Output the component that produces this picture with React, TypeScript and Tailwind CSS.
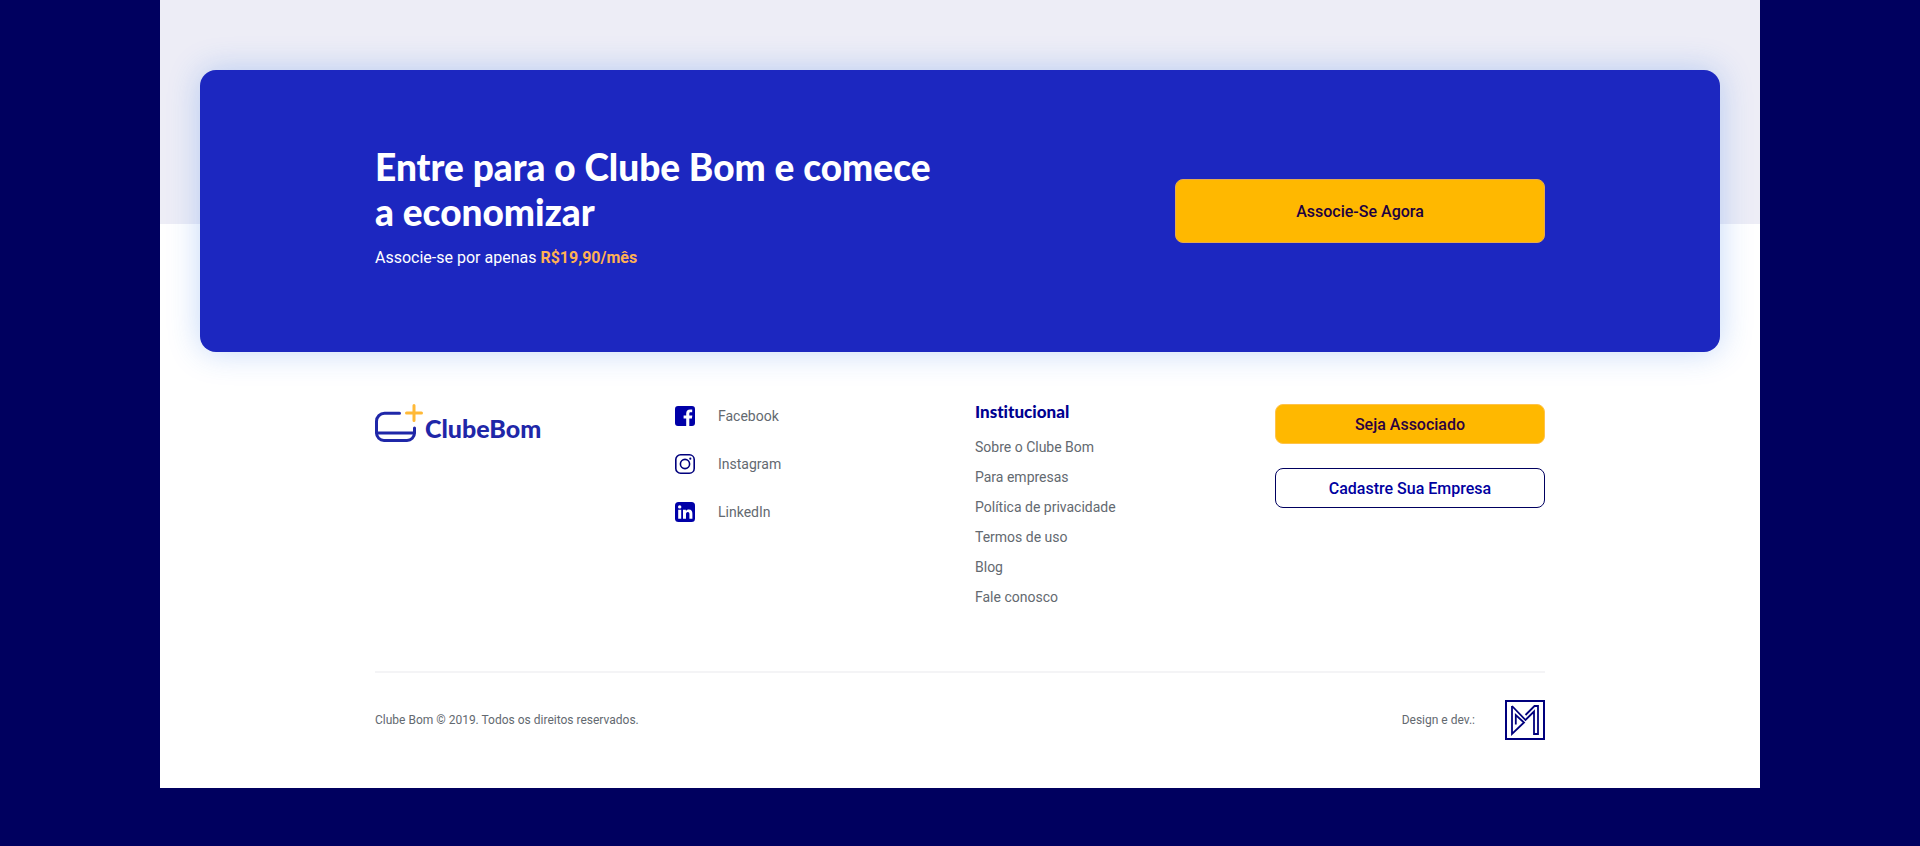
import clsx from 'clsx';

interface ISocialLink {
  label: string;
  href: string;
  icon: React.ReactNode;
}

const institutionalLinks: string[] = [
  'Sobre o Clube Bom',
  'Para empresas',
  'Política de privacidade',
  'Termos de uso',
  'Blog',
  'Fale conosco',
];

const socialLinks: ISocialLink[] = [
  {
    label: 'Facebook',
    href: '#facebook',
    icon: (
      <svg viewBox="0 0 20 20" className="size-5" fill="#0000a8" aria-hidden="true">
        <path d="M3 0h14a3 3 0 0 1 3 3v14a3 3 0 0 1-3 3h-2.700v-7.400h2.600l.4-3h-3V7.700c0-.9.4-1.400 1.400-1.400h1.500V3.600c-.6-.1-1.300-.2-2.100-.2-2.400 0-3.900 1.400-3.900 4v2.200H8.600v3h2.600V20H3a3 3 0 0 1-3-3V3a3 3 0 0 1 3-3z" />
      </svg>
    ),
  },
  {
    label: 'Instagram',
    href: '#instagram',
    icon: (
      <svg viewBox="0 0 20 20" className="size-5" fill="none" stroke="#00007d" strokeWidth="1.6" aria-hidden="true">
        <rect x="0.8" y="0.8" width="18.4" height="18.4" rx="4.8" />
        <circle cx="10" cy="10" r="4.6" />
        <circle cx="15.3" cy="4.7" r="1.1" fill="#00007d" stroke="none" />
      </svg>
    ),
  },
  {
    label: 'LinkedIn',
    href: '#linkedin',
    icon: (
      <svg viewBox="0 0 20 20" className="size-5" aria-hidden="true">
        <rect width="20" height="20" rx="3.5" fill="#0000a8" />
        <g fill="#fff">
          <circle cx="4.7" cy="4.9" r="1.7" />
          <path d="M3.2 7.8h3v9h-3zM8 7.8h2.900V9c.5-.8 1.500-1.500 2.900-1.500 2.800 0 3.600 1.800 3.600 4.300v5h-3v-4.500c0-1.200-.3-2.200-1.600-2.200s-1.800 1-1.800 2.200v4.500H8z" />
        </g>
      </svg>
    ),
  },
];

function Logo() {
  return (
    <a href="#inicio" className="flex items-start">
      <svg viewBox="0 0 50 40" className="h-10 w-[50px]" fill="none" strokeLinecap="round" aria-hidden="true">
        <g stroke="#1f27a8" strokeWidth="3">
          <path d="M24.5 9.3H9.5a8 8 0 0 0-8 8V29a7.500 7.500 0 0 0 7.500 7.500h23a7.500 7.500 0 0 0 7.500-7.500v-5" />
          <path d="M2 29h37" />
        </g>
        <path d="M39 1.500v15M31.500 9h15" stroke="#ffb937" strokeWidth="3" />
      </svg>
      <span className="pt-2 font-['Lato',sans-serif] text-[25px] leading-8 font-black text-[#1f27a8]">
        ClubeBom
      </span>
    </a>
  );
}

function Button({
  children,
  className,
}: {
  children: React.ReactNode;
  className: string;
}) {
  return (
    <button
      type="button"
      className={clsx(
        'w-full cursor-pointer rounded-lg border pt-0.5 text-base font-medium',
        className
      )}
    >
      {children}
    </button>
  );
}

function CallToAction() {
  return (
    <section className="relative -mt-[154px] px-10">
      <div className="rounded-2xl bg-[#1c27c0] py-[74px] shadow-[0_0_32px_rgba(40,110,230,0.28)]">
        <div className="mx-auto flex max-w-[1170px] items-center justify-between gap-8">
          <div className="max-w-[570px] pb-2">
            <h2 className="font-['Lato',sans-serif] text-[37px] leading-[45px] font-black text-white">
              Entre para o Clube Bom e comece a economizar
            </h2>
            <p className="mt-3 text-base leading-6 text-white">
              Associe-se por apenas{' '}
              <strong className="font-bold text-[#ffb153]">R$19,90/mês</strong>
            </p>
          </div>
          <div className="w-[370px]">
            <Button className="h-16 border-[#e5a94f] bg-[#ffb800] text-[#1c0040]">
              Associe-Se Agora
            </Button>
          </div>
        </div>
      </div>
    </section>
  );
}

function Footer() {
  return (
    <footer className="mx-auto max-w-[1170px] pt-[52px] pb-12 text-[#636970]">
      <div className="grid grid-cols-4 gap-[30px]">
        <Logo />
        <ul className="flex flex-col gap-6">
          {socialLinks.map((social) => (
            <li key={social.label}>
              <a href={social.href} className="flex h-6 items-center gap-[23px] text-sm">
                {social.icon}
                {social.label}
              </a>
            </li>
          ))}
        </ul>
        <div>
          <h3 className="font-['Lato',sans-serif] text-[17px] leading-4 font-black text-[#000090] [font-variant-ligatures:none]">
            Institucional
          </h3>
          <ul className="mt-3">
            {institutionalLinks.map((link) => (
              <li key={link}>
                <a href="#institucional" className="text-sm leading-[30px]">
                  {link}
                </a>
              </li>
            ))}
          </ul>
        </div>
        <div className="flex flex-col gap-6">
          <Button className="h-10 border-[#ffc34a] bg-[#ffb800] text-[#2b0040]">
            Seja Associado
          </Button>
          <Button className="h-10 border-[#00005f] bg-white text-[#0000a0]">
            Cadastre Sua Empresa
          </Button>
        </div>
      </div>
      <div className="mt-[59px] flex items-center justify-between border-t-2 border-[#f4f4f6] pt-[27px] text-xs">
        <p>Clube Bom © 2019. Todos os direitos reservados.</p>
        <div className="flex items-center gap-[30px]">
          <span>Design e dev.:</span>
          <a href="#agencia" aria-label="Agência">
            <svg viewBox="0 0 40 40" className="size-10" fill="none" stroke="#00007d" aria-hidden="true">
              <rect x="1" y="1" width="38" height="38" strokeWidth="2" />
              <path d="M7 6v28l12-11.500-8.200-7.500v9.500" strokeWidth="1.8" />
              <path d="M7 6l13.500 14L29 11.500V34h4V6h-3.500L20.500 15" strokeWidth="1.8" />
            </svg>
          </a>
        </div>
      </div>
    </footer>
  );
}

export default function App() {
  return (
    <div className="min-h-screen bg-[#00005f] px-40 font-['Roboto',sans-serif]">
      <main className="bg-white">
        <div className="h-56 bg-[#ededf6]" />
        <CallToAction />
        <Footer />
      </main>
    </div>
  );
}
